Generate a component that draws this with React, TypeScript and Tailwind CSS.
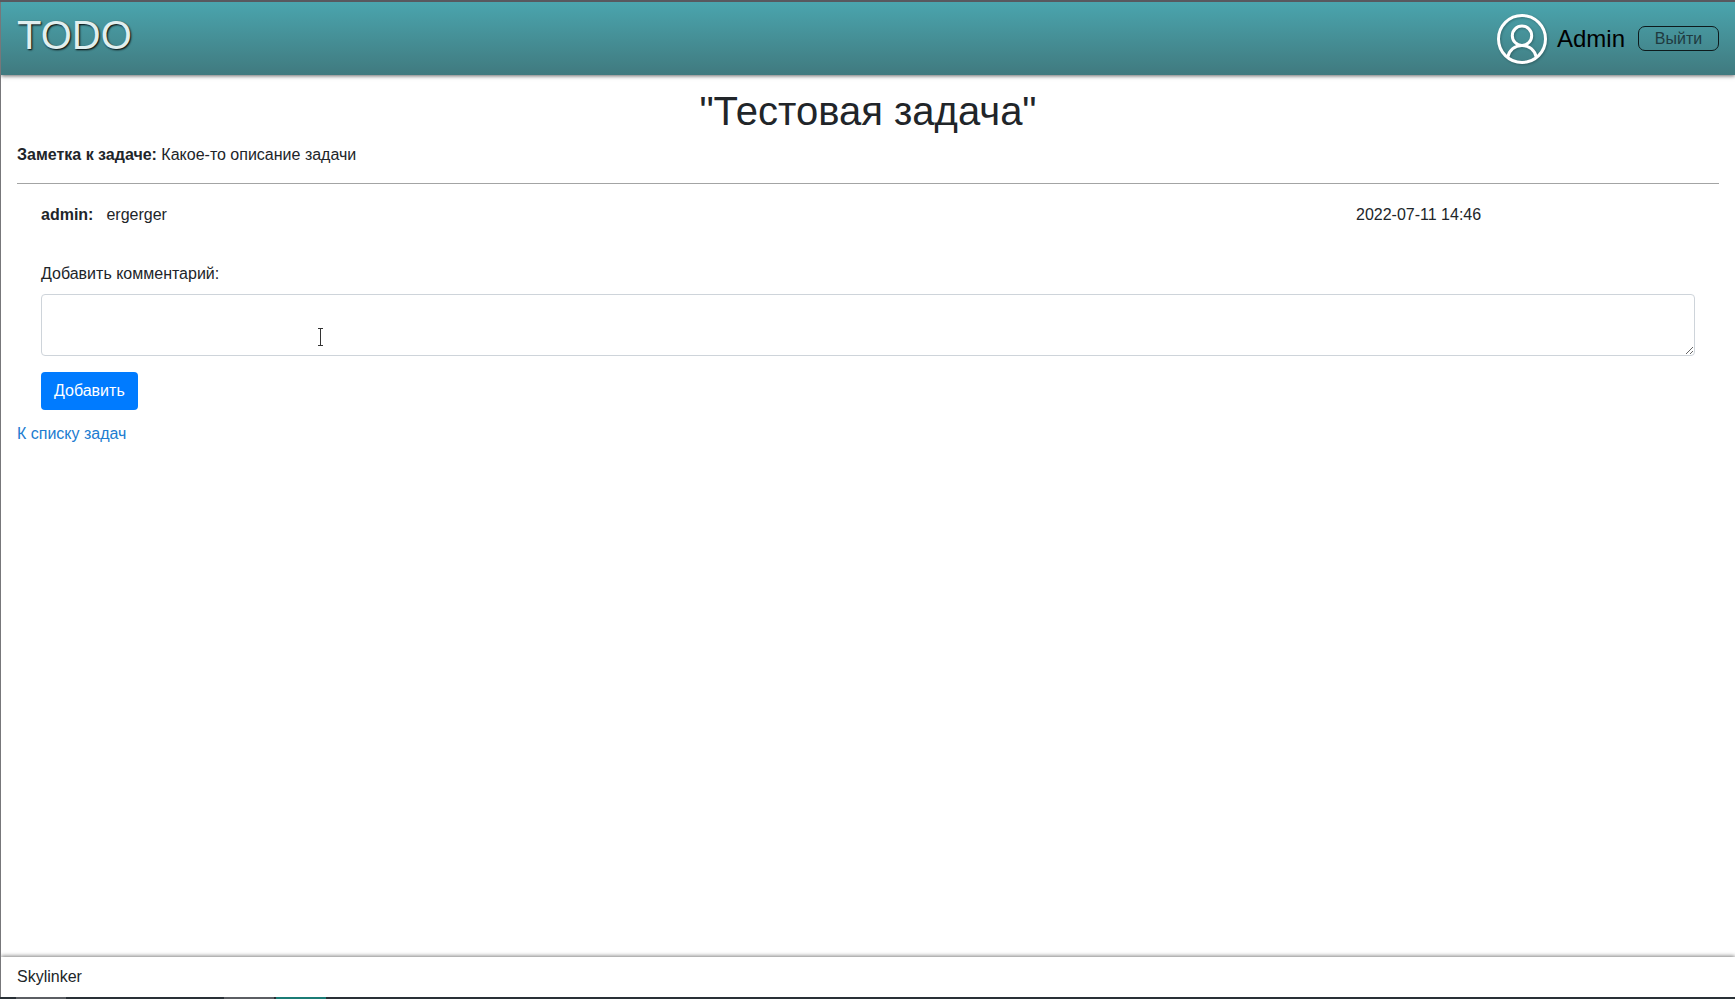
import React from "react";

function UserIcon() {
  return (
    <svg
      className="h-[50px] w-[50px] shrink-0 drop-shadow-[1px_1px_1px_rgba(0,0,0,0.25)]"
      viewBox="0 0 50 50"
      fill="none"
      stroke="#ffffff"
      strokeWidth="3"
    >
      <circle cx="25" cy="25" r="23.5" />
      <circle cx="25" cy="21.7" r="9.7" />
      <path d="M10.7 43.2C12.2 36 17.8 31.4 25 31.4S37.8 36 39.3 43.2" />
    </svg>
  );
}

function Header() {
  return (
    <header className="relative flex h-[73px] shrink-0 items-start justify-between bg-linear-to-b from-[#4aa5ae] to-[#407a7f] pr-4 pl-4 shadow-[0_1px_4px_rgba(0,0,0,0.6)]">
      <h1 className="pt-[9px] text-[40px] leading-[48px] text-[#e0efef] [text-shadow:1px_1px_2px_#000]">TODO</h1>
      <div className="flex items-center pt-3">
        <UserIcon />
        <span className="ml-[10px] text-2xl leading-9 text-black">Admin</span>
        <button className="mb-[2px] ml-[13px] h-[25px] w-[81px] rounded-[7px] border border-[#0d1a1c] text-base leading-[23px] text-[#1f3a3f]">
          Выйти
        </button>
      </div>
    </header>
  );
}

function TextCursor() {
  return (
    <svg className="absolute top-[34px] left-[276px] h-[18px] w-[7px]" viewBox="0 0 7 18" fill="none" stroke="#333" strokeWidth="1">
      <path d="M1 .5H6M1 17.5H6M3.5 1V17" />
    </svg>
  );
}

export default function App() {
  return (
    <div className="flex h-[999px] w-full flex-col overflow-hidden bg-white font-['Liberation_Sans',Arial,sans-serif] text-base leading-6 text-[#212529]">
      <div className="h-0.5 shrink-0 bg-[#58595f]" />
      <div className="flex min-h-0 flex-1 flex-col overflow-hidden border-l border-[#77777a]">
        <Header />
        <main className="flex-1 px-4 pt-3">
          <h2 className="mb-2 text-center text-[40px] leading-[48px]">"Тестовая задача"</h2>
          <p className="mb-4">
            <b>Заметка к задаче:</b> Какое-то описание задачи
          </p>
          <hr className="border-t border-[#a3a4a4]" />
          <div className="px-6 pt-[19px]">
            <div className="flex">
              <b>admin:</b>
              <span className="ml-[13px] flex-1">ergerger</span>
              <span className="w-[339px]">2022-07-11 14:46</span>
            </div>
            <label className="mt-[35px] mb-2 block" htmlFor="comment">Добавить комментарий:</label>
            <div className="relative">
              <textarea
                id="comment"
                className="block h-[62px] w-full resize-y rounded border border-[#ced4da] bg-white px-3 py-1.5 outline-none"
              />
              <TextCursor />
            </div>
            <button className="mt-4 block h-[38px] rounded bg-[#007bff] px-[13px] text-white">Добавить</button>
          </div>
          <a href="#" className="mt-3 inline-block text-[#207cd0]">К списку задач</a>
        </main>
        <footer className="h-10 shrink-0 px-4 pt-2 shadow-[0_-1px_4px_rgba(0,0,0,0.5)]">Skylinker</footer>
      </div>
      <div className="flex h-0.5 shrink-0 bg-[#293036]">
        <div className="ml-4 w-[50px] bg-[#5b5e63]" />
        <div className="ml-[158px] w-[50px] bg-[#5b5e63]" />
        <div className="ml-0.5 w-[50px] bg-[#1b7c76]" />
      </div>
    </div>
  );
}
